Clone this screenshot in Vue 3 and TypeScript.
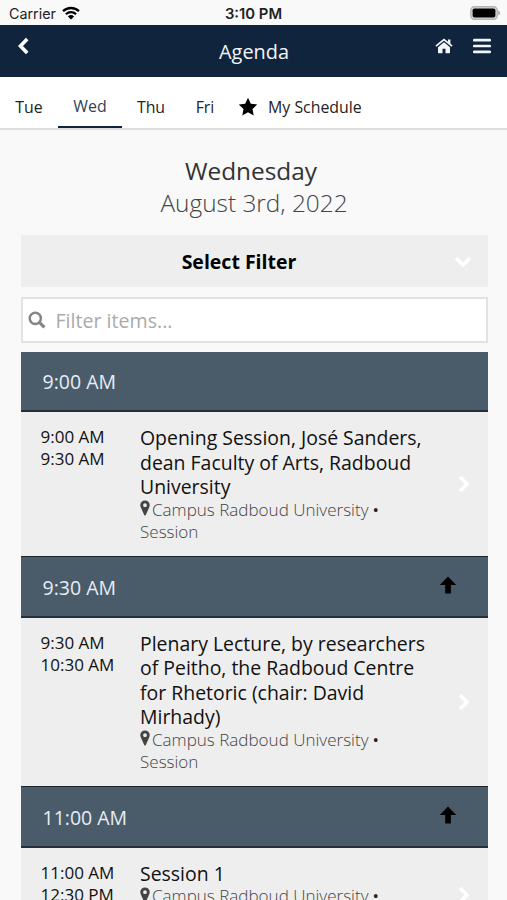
<script setup lang="ts">
import { ref } from 'vue'

interface Session {
  start: string
  end: string
  lines: string[]
}
interface Slot {
  label: string
  jump: boolean
  session: Session
}

const days: string[] = ['Tue', 'Wed', 'Thu', 'Fri']
const activeDay = ref<string>('Wed')
const query = ref<string>('')

const slots: Slot[] = [
  {
    label: '9:00 AM',
    jump: false,
    session: {
      start: '9:00 AM',
      end: '9:30 AM',
      lines: ['Opening Session, José Sanders,', 'dean Faculty of Arts, Radboud', 'University'],
    },
  },
  {
    label: '9:30 AM',
    jump: true,
    session: {
      start: '9:30 AM',
      end: '10:30 AM',
      lines: ['Plenary Lecture, by researchers', 'of Peitho, the Radboud Centre', 'for Rhetoric (chair: David', 'Mirhady)'],
    },
  },
  {
    label: '11:00 AM',
    jump: true,
    session: { start: '11:00 AM', end: '12:30 PM', lines: ['Session 1'] },
  },
]
</script>

<template>
  <div class="screen">
    <div class="status">
      <div class="carrier">
        <span>Carrier</span>
        <svg class="wifi" viewBox="0 0 18 14" width="18" height="14">
          <path d="M1 5.2a11.6 11.6 0 0 1 16 0" fill="none" stroke="#000" stroke-width="2.3" />
          <path d="M3.9 8.2a7.4 7.4 0 0 1 10.2 0" fill="none" stroke="#000" stroke-width="2.2" />
          <path d="M9 13.6 5.9 10.4a4.5 4.5 0 0 1 6.2 0z" fill="#000" />
        </svg>
      </div>
      <span class="clock">3:10 PM</span>
      <div class="battery">
        <svg viewBox="0 0 31 14" width="31" height="14">
          <rect x=".8" y=".8" width="26.4" height="12.4" rx="3.6" fill="#dcdcdc" stroke="#b4b4b4" stroke-width="1.4" />
          <rect x="2.6" y="2.4" width="22.8" height="9.2" rx="1.8" fill="#000" />
          <path d="M28.2 4.6q1.8.8 1.8 2.4t-1.8 2.4z" fill="#aaa" />
        </svg>
      </div>
    </div>

    <header class="bar">
      <button class="icon-btn back" aria-label="Back">
        <svg viewBox="0 0 12 18" width="12" height="18">
          <path d="M10.2 2 3.500 9l6.700 7" fill="none" stroke="#fff" stroke-width="3.6" />
        </svg>
      </button>
      <h1>Agenda</h1>
      <div class="actions">
        <svg viewBox="0 0 18 16" width="18" height="16">
          <path d="M9 4.300 3 9.300v5.100q0 .8.8.8h3.700v-4.400h3v4.400h3.700q.8 0 .8-.8V9.300z" fill="#f1f6fb" />
          <path d="M.9 8.200 9 1.500l8.100 6.700" fill="none" stroke="#f1f6fb" stroke-width="1.700" />
          <path d="M13 1.600h2.400v5L13 4.600z" fill="#f1f6fb" />
        </svg>
        <svg viewBox="0 0 18 16" width="18" height="16">
          <path d="M1.300 2.200h15.400M1.300 8h15.400M1.300 13.800h15.400" fill="none" stroke="#f1f6fb" stroke-width="2.700" stroke-linecap="round" />
        </svg>
      </div>
    </header>

    <nav class="tabs">
      <a v-for="day in days" :key="day" class="tab" :class="[day.toLowerCase(), { active: day === activeDay }]" @click="activeDay = day">{{ day }}</a>
      <a class="tab mine">
        <svg viewBox="0 0 20 19" width="20" height="19">
          <path d="M10 .8l2.800 5.900 6.400.8-4.700 4.500 1.200 6.400L10 15.300l-5.700 3.100L5.500 12 .8 7.500l6.400-.8z" fill="#000" />
        </svg>
        <span>My Schedule</span>
      </a>
    </nav>

    <main class="content">
      <div class="date">
        <h2>Wednesday</h2>
        <p>August 3rd, 2022</p>
      </div>

      <div class="select">
        <span>Select Filter</span>
        <svg class="down" viewBox="0 0 18 12" width="18" height="12">
          <path d="m2 2 7 6.900L16 2" fill="none" stroke="#fff" stroke-width="3.600" />
        </svg>
      </div>

      <label class="search">
        <svg viewBox="0 0 18 18" width="18" height="18">
          <circle cx="7.300" cy="7.300" r="5.600" fill="none" stroke="#858585" stroke-width="2.500" />
          <path d="m11.400 11.400 5 5" stroke="#858585" stroke-width="3" />
        </svg>
        <input v-model="query" type="text" placeholder="Filter items..." />
      </label>

      <section v-for="slot in slots" :key="slot.label" class="slot">
        <div class="slot-head" :class="{ first: !slot.jump }">
          <span>{{ slot.label }}</span>
          <svg v-if="slot.jump" viewBox="0 0 18 18" width="18" height="18">
            <path d="M9 .5 17.200 9h-5.300v8.500H6.200V9H.8z" fill="#000" />
          </svg>
        </div>
        <article class="item">
          <div class="times">
            <div>{{ slot.session.start }}</div>
            <div>{{ slot.session.end }}</div>
          </div>
          <div class="detail">
            <h3>
              <span v-for="line in slot.session.lines" :key="line">{{ line }}</span>
            </h3>
            <p>
              <svg class="pin" viewBox="0 0 10 16" width="10" height="16">
                <path d="M5 .4a4.700 4.700 0 0 1 4.700 4.700c0 1.500-.5 2.300-.9 3.200L5.800 15q-.8 1.200-1.600 0L1.200 8.300C.8 7.400.3 6.600.3 5.100A4.700 4.700 0 0 1 5 .4zM5 3.300a1.900 1.900 0 1 0 0 3.800A1.900 1.900 0 0 0 5 3.300z" fill="#444" />
              </svg><span class="place">Campus Radboud University</span> <b>•</b>
            </p>
            <p>Session</p>
          </div>
          <svg class="next" viewBox="0 0 12 18" width="12" height="18">
            <path d="m2 2 7 7-7 7" fill="none" stroke="#fff" stroke-width="3.600" />
          </svg>
        </article>
      </section>
    </main>
  </div>
</template>

<style>
body {
  margin: 0;
  overflow: hidden;
}
</style>

<style scoped>
.screen {
  width: 507px;
  height: 900px;
  overflow: hidden;
  background: #f9f9f9;
  color: #111;
  font-family: 'Open Sans', 'Noto Sans', sans-serif;
}
h1,
h2,
h3,
p {
  margin: 0;
  font-weight: 400;
}
svg {
  display: block;
  flex: none;
}
.status {
  display: grid;
  grid-template-columns: 1fr auto 1fr;
  align-items: center;
  height: 25px;
  padding: 2px 7px 0 9px;
  box-sizing: border-box;
  background: #f9f9f9;
  font-family: Inter, sans-serif;
  font-size: 14.3px;
  color: #222;
}
.carrier {
  display: flex;
  align-items: center;
  gap: 6px;
}
.wifi {
  margin-top: -2px;
}
.clock {
  padding-right: 2px;
  font-size: 14.8px;
  font-weight: 600;
}
.battery {
  display: flex;
  justify-content: flex-end;
  margin-top: -1px;
}
.battery svg {
  margin-right: -1px;
}
.bar {
  display: grid;
  grid-template-columns: 1fr auto 1fr;
  height: 52px;
  box-sizing: border-box;
  padding: 0 16px 0 17px;
  background: #10253d;
  color: #f1f6fb;
}
.icon-btn {
  justify-self: start;
  align-self: start;
  margin-top: 12px;
  padding: 0;
  border: 0;
  background: none;
}
.bar h1 {
  font-size: 19.9px;
  line-height: 53px;
  font-weight: 520;
}
.actions {
  display: flex;
  justify-content: flex-end;
  gap: 20px;
  padding-top: 13px;
}
.tabs {
  display: flex;
  height: 53px;
  box-sizing: border-box;
  border-bottom: 2px solid #dedede;
  background: #fff;
  font-size: 15.9px;
  line-height: 61px;
  color: #222;
}
.tab.tue {
  width: 58px;
  text-align: center;
}
.tab.active {
  width: 64px;
  height: 51px;
  box-sizing: border-box;
  border-bottom: 2px solid #10253d;
  text-align: center;
  line-height: 58px;
  color: #2d4359;
}
.tab.thu {
  width: 58px;
  text-align: center;
}
.tab.fri {
  width: 50px;
  text-align: center;
}
.tab.mine {
  display: flex;
  padding-left: 8px;
  gap: 10px;
}
.tab.mine svg {
  margin-top: 20px;
}
.content {
  padding: 0 19.5px 0 20.5px;
}
.date {
  height: 105px;
  box-sizing: border-box;
  padding-top: 25px;
  text-align: center;
  line-height: 32px;
  font-size: 24.4px;
  color: #333;
}
.date h2 {
  padding-right: 6px;
  font-size: inherit;
}
.date p {
  font-weight: 300;
  color: #444;
}
.select {
  display: flex;
  align-items: center;
  height: 52px;
  padding: 1px 16px 0 0;
  box-sizing: border-box;
  background: #eee;
  color: #000;
  font-size: 19.5px;
  font-weight: 700;
}
.select span {
  flex: 1;
  padding-left: 4px;
  text-align: center;
}
.search {
  display: flex;
  align-items: center;
  gap: 10px;
  height: 46px;
  box-sizing: border-box;
  margin: 10px 0 9px;
  padding-left: 5px;
  border: 2px solid #e2e2e2;
  background: #fff;
}
.search input {
  flex: 1;
  padding: 0;
  border: 0;
  outline: 0;
  background: none;
  font: 19.6px 'Open Sans', sans-serif;
}
.search input::placeholder {
  color: #aaa;
}
.slot-head {
  display: flex;
  align-items: center;
  justify-content: space-between;
  height: 62px;
  box-sizing: border-box;
  padding: 0 31px 0 22px;
  border-top: 1px solid #1c252d;
  border-bottom: 2px solid #262f38;
  background: #4a5b69;
  color: #e6edf5;
  font-size: 19.5px;
}
.slot-head span {
  padding-top: 2px;
}
.slot-head svg {
  margin-top: -3px;
}
.slot-head.first {
  height: 60px;
  border-top: 0;
}
.slot-head.first span {
  padding-top: 0;
}
.item {
  display: flex;
  box-sizing: border-box;
  padding: 14px 18px 12px 20px;
  background: #eee;
}
.times {
  width: 99.5px;
  font-size: 17px;
  line-height: 22px;
}
.detail {
  flex: 1;
  white-space: nowrap;
}
.detail h3 {
  margin-bottom: -1px;
  font-size: 19.45px;
  line-height: 24.5px;
}
.detail h3 span {
  display: block;
}
.detail p {
  display: flex;
  height: 22px;
  align-items: center;
  font-size: 17.05px;
  font-weight: 320;
  line-height: 22px;
  color: #444;
}
.detail p:last-child {
  padding-bottom: 1px;
}
.detail b {
  margin-left: 4px;
  color: #222;
  font-weight: 500;
}
.pin {
  margin: -3px 2px 0 0;
}
.next {
  align-self: center;
  margin-top: -2px;
}
</style>
